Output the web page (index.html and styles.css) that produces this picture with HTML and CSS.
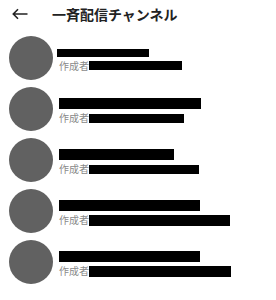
FILE: index.html
```html
<!DOCTYPE html>
<html lang="ja">
<head>
    <meta charset="UTF-8">
    <meta name="viewport" content="width=device-width, initial-scale=1.0">
    <title>一斉配信チャンネル</title>
    <link rel="stylesheet" href="styles.css">
</head>
<body>
    <div class="header">
        <svg class="back" width="16" height="12" viewBox="0 0 16 12">
            <path d="M15.5 6H1.5M6 1.3L1.3 6 6 10.7" fill="none" stroke="#222" stroke-width="1.6"/>
        </svg>
        <h1>一斉配信チャンネル</h1>
    </div>

    <ul class="list">
        <li class="row">
            <div class="avatar"></div>
            <div class="info">
                <div class="name small" style="width: 92px"></div>
                <div class="sub"><span>作成者</span><i class="bar" style="width: 93px"></i></div>
            </div>
        </li>
        <li class="row">
            <div class="avatar"></div>
            <div class="info">
                <div class="name" style="width: 142px"></div>
                <div class="sub"><span>作成者</span><i class="bar" style="width: 95px"></i></div>
            </div>
        </li>
        <li class="row">
            <div class="avatar"></div>
            <div class="info">
                <div class="name" style="width: 115px"></div>
                <div class="sub"><span>作成者</span><i class="bar" style="width: 110px"></i></div>
            </div>
        </li>
        <li class="row">
            <div class="avatar"></div>
            <div class="info">
                <div class="name" style="width: 141px"></div>
                <div class="sub"><span>作成者</span><i class="bar tall" style="width: 141px"></i></div>
            </div>
        </li>
        <li class="row">
            <div class="avatar"></div>
            <div class="info">
                <div class="name" style="width: 141px"></div>
                <div class="sub"><span>作成者</span><i class="bar tall" style="width: 142px"></i></div>
            </div>
        </li>
    </ul>
</body>
</html>
```

FILE: styles.css
```css
* {
    margin: 0;
    padding: 0;
    box-sizing: border-box;
}
body {
    background: #fff;
    font-family: "Noto Sans CJK JP", "Noto Sans", sans-serif;
    color: #222;
}
.header {
    display: flex;
    align-items: center;
    height: 30px;
    padding-left: 12px;
}
.back {
    display: block;
    margin-top: -2px;
}
.header h1 {
    font-size: 14px;
    font-weight: bold;
    line-height: 1;
    margin-left: 24px;
    margin-top: -2px;
    letter-spacing: 0;
}
.list {
    list-style: none;
    padding-top: 2px;
}
.row {
    display: flex;
    align-items: center;
    height: 51px;
    padding-left: 9px;
}
.avatar {
    width: 44px;
    height: 44px;
    border-radius: 50%;
    background: #616161;
    flex-shrink: 0;
}
.info {
    display: flex;
    flex-direction: column;
    margin-left: 5px;
    margin-top: 4px;
}
.name {
    height: 11px;
    background: #000;
    margin-left: 1px;
}
.name.small {
    height: 8px;
    margin-left: -1px;
}
.sub {
    display: flex;
    align-items: center;
    margin-top: 4px;
    font-size: 10px;
    line-height: 10px;
    color: #8a8a8a;
}
.sub span {
    margin-left: 1px;
}
.bar {
    display: block;
    height: 9px;
    background: #000;
}
.bar.tall {
    height: 11px;
}
```
